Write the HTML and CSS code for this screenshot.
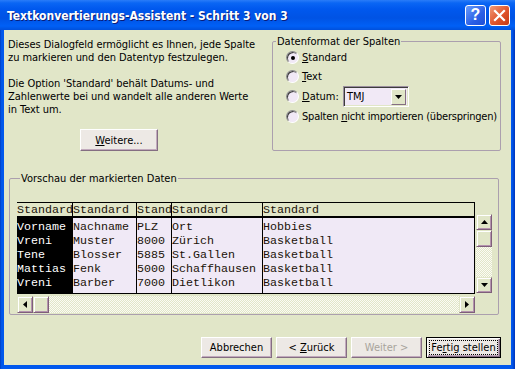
FILE: index.html
```html
<!DOCTYPE html>
<html lang="de">
<head>
  <meta charset="UTF-8">
  <meta name="viewport" content="width=device-width, initial-scale=1.0">
  <title>Textkonvertierungs-Assistent</title>
  <link rel="stylesheet" href="styles.css">
</head>
<body>
  <div class="window">
    <div class="titlebar">
      <span class="title">Textkonvertierungs-Assistent - Schritt 3 von 3</span>
      <div class="caption-buttons">
        <span class="cap help">?</span>
        <span class="cap close">
          <svg width="13" height="13" viewBox="0 0 13 13"><path d="M2 2 L11 11 M11 2 L2 11" stroke="#fff" stroke-width="2.2" stroke-linecap="square"/></svg>
        </span>
      </div>
    </div>

    <div class="client">
      <div class="top">
        <div class="intro">
          <p>Dieses Dialogfeld ermöglicht es Ihnen, jede Spalte<br>zu markieren und den Datentyp festzulegen.</p>
          <p>Die Option 'Standard' behält Datums- und<br>Zahlenwerte bei und wandelt alle anderen Werte<br>in Text um.</p>
          <button class="btn more"><u>W</u>eitere...</button>
        </div>

        <fieldset class="group format">
          <legend>Datenformat der Spalten</legend>
          <div class="options">
            <div class="radio checked"><span class="mark"></span><span><u>S</u>tandard</span></div>
            <div class="radio"><span class="mark"></span><span><u>T</u>ext</span></div>
            <div class="radio datum">
              <span class="mark"></span>
              <span class="datum-label"><u>D</u>atum:</span>
              <div class="select">
                <span class="select-value">TMJ</span>
                <span class="drop">
                  <svg width="7" height="4" viewBox="0 0 7 4"><polygon points="0,0 7,0 3.5,4" fill="#000"/></svg>
                </span>
              </div>
            </div>
            <div class="radio"><span class="mark"></span><span class="long">Spalten <u>n</u>icht importieren (überspringen)</span></div>
          </div>
        </fieldset>
      </div>

      <fieldset class="group preview">
        <legend>Vorschau der markierten Daten</legend>
        <div class="preview-grid">
          <div class="data">
            <div class="col c1 selected">
              <div class="head">Standard</div>
              <div class="cells"><div>Vorname</div><div>Vreni</div><div>Tene</div><div>Mattias</div><div>Vreni</div></div>
            </div>
            <div class="col c2">
              <div class="head">Standard</div>
              <div class="cells"><div>Nachname</div><div>Muster</div><div>Blosser</div><div>Fenk</div><div>Barber</div></div>
            </div>
            <div class="col c3">
              <div class="head">Stand</div>
              <div class="cells"><div>PLZ</div><div>8000</div><div>5885</div><div>5000</div><div>7000</div></div>
            </div>
            <div class="col c4">
              <div class="head">Standard</div>
              <div class="cells"><div>Ort</div><div>Zürich</div><div>St.Gallen</div><div>Schaffhausen</div><div>Dietlikon</div></div>
            </div>
            <div class="col c5">
              <div class="head">Standard</div>
              <div class="cells"><div>Hobbies</div><div>Basketball</div><div>Basketball</div><div>Basketball</div><div>Basketball</div></div>
            </div>
          </div>

          <div class="vscroll">
            <span class="sbtn"><svg width="7" height="4" viewBox="0 0 7 4"><polygon points="3.5,0 7,4 0,4" fill="#000"/></svg></span>
            <span class="sbtn thumb"></span>
            <span class="track"></span>
            <span class="sbtn"><svg width="7" height="4" viewBox="0 0 7 4"><polygon points="0,0 7,0 3.5,4" fill="#000"/></svg></span>
          </div>

          <div class="hscroll">
            <span class="sbtn"><svg width="4" height="7" viewBox="0 0 4 7"><polygon points="4,0 4,7 0,3.5" fill="#000"/></svg></span>
            <span class="sbtn thumb"></span>
            <span class="track"></span>
            <span class="sbtn"><svg width="4" height="7" viewBox="0 0 4 7"><polygon points="0,0 4,3.5 0,7" fill="#000"/></svg></span>
          </div>
        </div>
      </fieldset>

      <div class="actions">
        <button class="btn">Abbrechen</button>
        <button class="btn">&lt; <u>Z</u>urück</button>
        <button class="btn disabled">Weiter &gt;</button>
        <button class="btn default">Fe<u>r</u>tig stellen</button>
      </div>
    </div>
  </div>
</body>
</html>
```

FILE: styles.css
```css
body {
  margin: 0;
  font-family: 'DejaVu Sans Condensed', 'Liberation Sans', sans-serif;
  font-size: 11px;
  color: #000;
}

.window {
  width: 515px;
  height: 369px;
  display: flex;
  flex-direction: column;
  background: linear-gradient(90deg, #0034b8 0, #0055e5 1px, #0058ee 3px, #0058ee 512px, #0034b8 515px);
}

.titlebar {
  height: 30px;
  flex: none;
  display: flex;
  align-items: center;
  justify-content: space-between;
  padding: 0 5px 0 7px;
  background: linear-gradient(#2a7cf8 0, #0a66f4 3px, #0058ee 9px, #0053e4 18px, #0060f6 26px, #0050dc 30px);
}

.title {
  color: #fff;
  font-weight: bold;
  font-size: 12px;
  text-shadow: 1px 1px 0 #0a1c78;
  padding-top: 1px;
}

.caption-buttons {
  display: flex;
  gap: 3px;
}

.cap {
  width: 19px;
  height: 19px;
  border: 1px solid #fff;
  border-radius: 3px;
  display: flex;
  align-items: center;
  justify-content: center;
}

.help {
  background: linear-gradient(135deg, #6a9cfb, #2a5fe6 60%, #1f4fd6);
  color: #fff;
  font-weight: bold;
  font-size: 16px;
  font-family: 'Liberation Sans', sans-serif;
}

.close {
  background: linear-gradient(135deg, #f09a78, #e0542c 55%, #c53a14);
}

.client {
  flex: 1;
  margin: 0 4px 4px;
  background: #e1e6c8;
  padding: 5px 10px 0 4px;
  display: flex;
  flex-direction: column;
}

.top {
  display: flex;
}

.intro {
  width: 264px;
  padding-top: 3px;
  letter-spacing: -0.05px;
}

.intro p {
  margin: 0 0 13px;
  line-height: 13px;
}

.btn {
  font-family: inherit;
  font-size: 11px;
  color: #000;
  height: 21px;
  width: 71px;
  padding: 0;
  background: #ede9e5;
  border: 1px solid;
  border-color: #fff #846e82 #846e82 #fff;
  box-shadow: inset -1px -1px 0 #c2aabd;
}

.btn.more {
  margin-left: 72px;
  width: 78px;
  height: 22px;
}

.group {
  margin: 0;
  border: 1px solid #ab9fae;
  border-radius: 2px;
  box-sizing: border-box;
}

.group legend {
  padding: 0 1px;
  margin-left: 3px;
  line-height: 13px;
}

.format {
  width: 229px;
  padding: 0 0 6px;
}

.options {
  margin-left: 13px;
}

.radio {
  height: 19px;
  display: flex;
  align-items: center;
  gap: 3px;
  white-space: nowrap;
}

.radio.datum {
  height: 21px;
}

.long {
  letter-spacing: -0.2px;
}

.mark {
  flex: none;
  width: 13px;
  height: 13px;
  box-sizing: border-box;
  border-radius: 50%;
  border: 1px solid;
  border-color: #8a8a8a #fff #fff #8a8a8a;
  background: #f1e9f6;
  box-shadow: inset 1px 1px 0 #3c3c3c;
  display: flex;
  align-items: center;
  justify-content: center;
}

.checked .mark::after {
  content: '';
  width: 4px;
  height: 4px;
  border-radius: 50%;
  background: #000;
}

.datum-label {
  width: 38px;
}

.select {
  width: 66px;
  height: 21px;
  box-sizing: border-box;
  border: 1px solid;
  border-color: #9b8f9e #fff #fff #9b8f9e;
  box-shadow: inset 1px 1px 0 #3c3c3c, inset -1px -1px 0 #e1e6c8;
  background: #f1e9f6;
  display: flex;
  align-items: center;
  padding: 2px 2px 2px 3px;
}

.select-value {
  flex: 1;
}

.drop {
  width: 15px;
  height: 16px;
  box-sizing: border-box;
  background: #e1e6c8;
  border: 1px solid;
  border-color: #fff #846e82 #846e82 #fff;
  display: flex;
  align-items: center;
  justify-content: center;
}

.preview {
  width: 490px;
  margin: 21px 0 0 1px;
  padding: 0 0 1px 7px;
}

.preview-grid {
  margin-top: 17px;
  display: grid;
  grid-template-columns: 458px 16px;
  grid-template-rows: 92px 17px;
  column-gap: 1px;
  row-gap: 2px;
}

.data {
  display: flex;
  box-sizing: border-box;
  border-top: 1px solid #000;
  border-bottom: 1px solid #000;
  font-family: 'Liberation Mono', monospace;
  font-size: 11.67px;
  color: #1a1208;
}

.col {
  box-sizing: border-box;
  border-right: 1px solid #000;
  display: flex;
  flex-direction: column;
  overflow: hidden;
  white-space: nowrap;
}

.c1 { width: 56px; }
.c2 { width: 64px; }
.c3 { width: 35px; }
.c4 { width: 91px; }
.c5 { width: 212px; }

.head {
  height: 13px;
  line-height: 15px;
  border-bottom: 2px solid #000;
  background: #e1e6c8;
}

.cells {
  flex: 1;
  background: #f0e9f6;
  padding: 2px 0 3px;
}

.cells div {
  height: 14px;
  line-height: 14px;
}

.selected .cells {
  background: #000;
  color: #fff;
}

.vscroll {
  display: flex;
  flex-direction: column;
  margin: 12px 0 1px;
}

.hscroll {
  display: flex;
}

.sbtn {
  flex: none;
  width: 16px;
  height: 16px;
  box-sizing: border-box;
  background: #e1e6c8;
  border: 1px solid;
  border-color: #e1e6c8 #7e5f7a #7e5f7a #e1e6c8;
  box-shadow: inset 1px 1px 0 #fff, inset -1px -1px 0 #b493ae;
  display: flex;
  align-items: center;
  justify-content: center;
}

.vscroll .thumb {
  height: 17px;
}

.hscroll .sbtn {
  height: 17px;
}

.track {
  flex: 1;
  background: repeating-conic-gradient(#fbfbf4 0 25%, #e1e6c8 0 50%) 0 0 / 2px 2px;
}

.actions {
  margin-top: 22px;
  display: flex;
  justify-content: flex-end;
  gap: 4px;
}

.btn.disabled {
  color: #a8a49c;
}

.btn.default {
  width: 75px;
  border: 1px solid #000;
  box-shadow: inset 1px 1px 0 #fff, inset -1px -1px 0 #846e82, inset -2px -2px 0 #c2aabd;
  outline: 1px dotted #000;
  outline-offset: -4px;
}
```
